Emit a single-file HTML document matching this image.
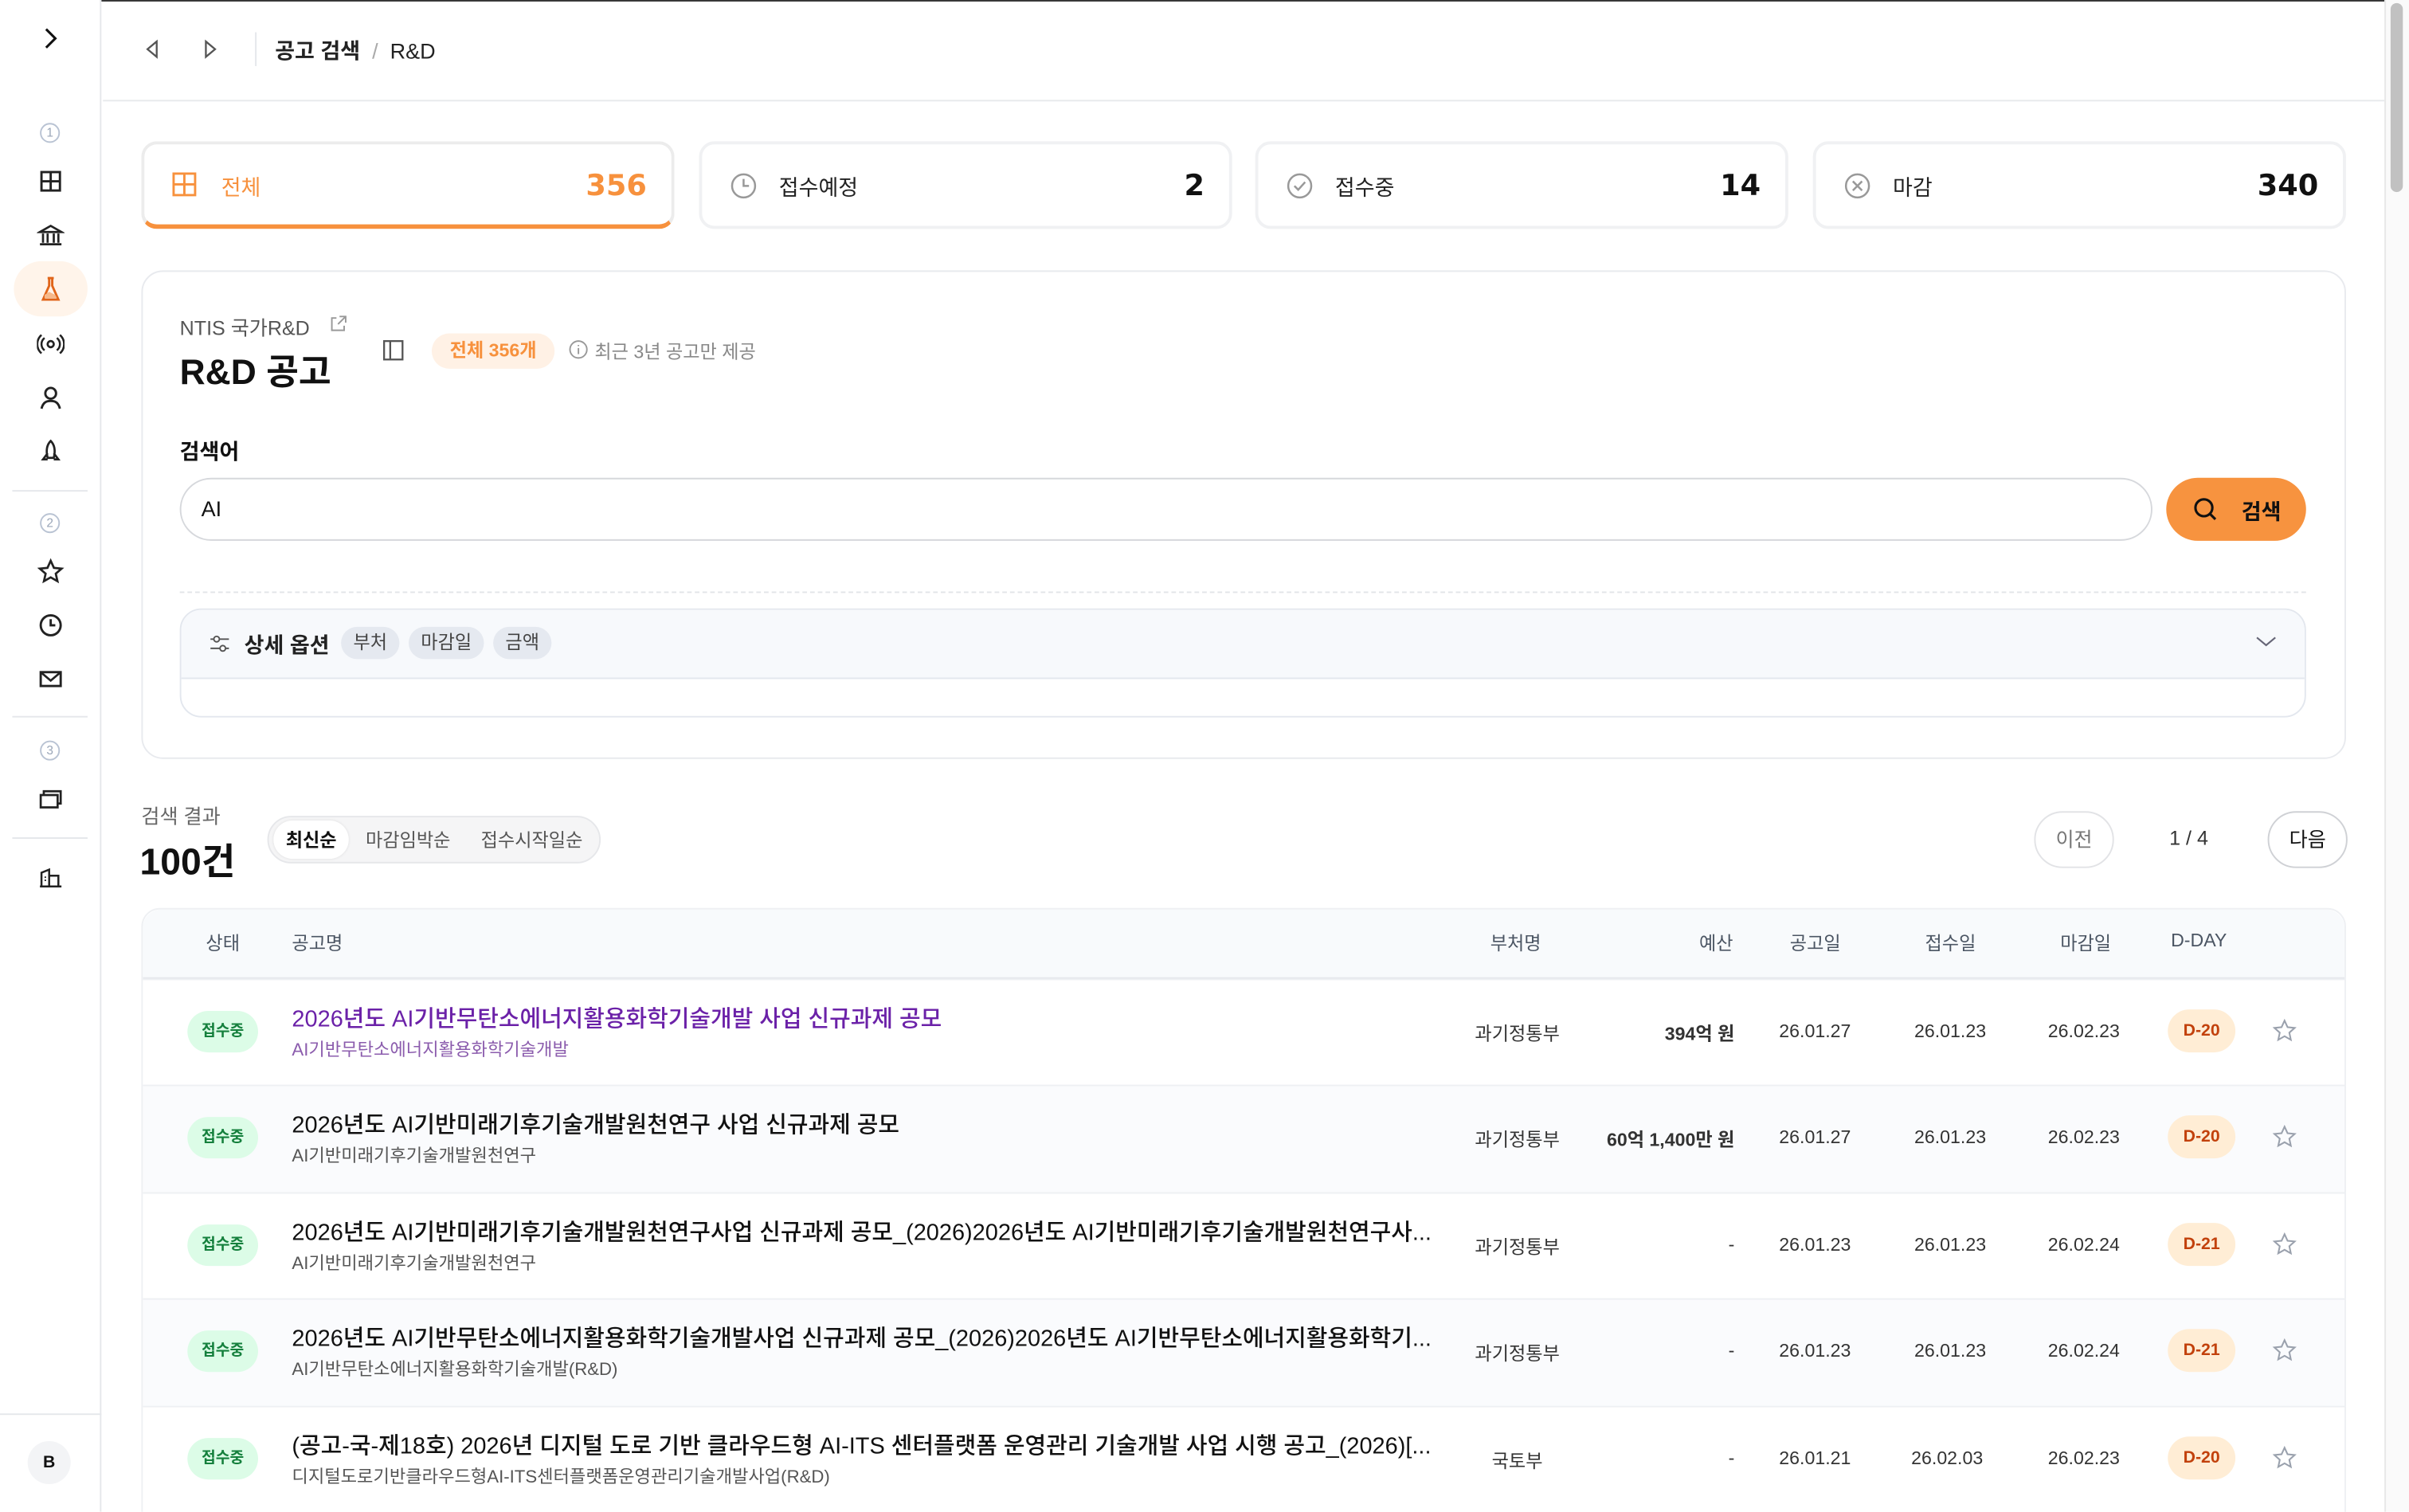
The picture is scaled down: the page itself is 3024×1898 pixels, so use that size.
<!DOCTYPE html>
<html><head><meta charset="utf-8">
<style>
*{box-sizing:border-box;margin:0;padding:0}
html,body{width:3024px;height:1898px;overflow:hidden;background:#fff}
#w{position:absolute;left:0;top:0;width:1568px;height:984px;overflow:hidden;transform:scale(1.928571);transform-origin:0 0;font-family:"Liberation Sans","Noto Sans CJK KR",sans-serif;color:#111;background:#fff}
.a{position:absolute}
.side{left:0;top:0;width:66px;height:984px;border-right:1px solid #e5e7eb;background:#fff}
.ic{position:absolute;left:24px;width:18px;height:18px}
.sep{position:absolute;left:8px;width:49px;height:1px;background:#e5e7eb}
.num{position:absolute;left:26px;width:13px;height:13px;border:1px solid #b9c3d3;border-radius:50%;font-size:8px;color:#9aa6b8;text-align:center;line-height:11px}
.card{position:absolute;top:92px;height:57px;width:347px;border:2px solid #f0f1f3;border-radius:10px;background:#fff}
.card .l{position:absolute;left:50px;top:18px;font-size:14px;color:#222}
.card .n{position:absolute;right:16px;top:16px;font-size:19px;font-weight:bold;font-family:"DejaVu Sans",sans-serif;color:#111}
.card svg{position:absolute;left:18px;top:18px}
.th{position:absolute;top:605px;font-size:12px;color:#4b5563}
.row{position:absolute;left:93px;width:1433px;height:70px;border-top:1px solid #eef0f3}
.bd{position:absolute;left:29px;top:20px;width:46px;height:27px;border-radius:14px;background:#dcfce7;color:#15803d;font-size:10px;font-weight:bold;text-align:center;line-height:27px}
.t{position:absolute;left:97px;top:14px;font-size:15px;color:#111;white-space:nowrap;font-weight:500}
.s{position:absolute;left:97px;top:37px;font-size:11.5px;color:#555;white-space:nowrap}
.c{position:absolute;top:26px;font-size:12px;color:#333;white-space:nowrap}
.dd{position:absolute;left:1318px;top:19px;width:44px;height:28px;border-radius:14px;background:#ffedd5;color:#c2410c;font-size:11px;font-weight:bold;text-align:center;line-height:28px}
.st{position:absolute;left:1386px;top:25px}
</style></head><body><div id="w">
<div class="a" style="left:0;top:0;width:1568px;height:1px;background:#333"></div>
<div class="a side">
 <svg class="ic" style="top:16px" viewBox="0 0 18 18"><path d="M6 3l6 6-6 6" fill="none" stroke="#111" stroke-width="1.6"/></svg>
 <div class="num" style="top:80px">1</div>
 <svg class="ic" style="top:109px" viewBox="0 0 18 18"><rect x="3" y="3" width="12" height="12" fill="none" stroke="#222" stroke-width="1.5"/><path d="M9 3v12M3 9h12" stroke="#222" stroke-width="1.5"/></svg>
 <svg class="ic" style="top:144px" viewBox="0 0 18 18"><path d="M2 7l7-4 7 4zM4 8v6M7 8v6M11 8v6M14 8v6M2 15h14" fill="none" stroke="#222" stroke-width="1.4"/></svg>
 <div class="a" style="left:9px;top:170px;width:48px;height:36px;border-radius:18px;background:#fff4ea"></div>
 <svg class="ic" style="top:179px" viewBox="0 0 18 18"><path d="M7 2h4M8 2v5l-4 9h10l-4-9V2" fill="none" stroke="#e0651a" stroke-width="1.5"/><path d="M5 13l3-2 4 2 1 2H5z" fill="#f7b98a"/></svg>
 <svg class="ic" style="top:215px" viewBox="0 0 18 18"><circle cx="9" cy="9" r="2" fill="none" stroke="#222" stroke-width="1.4"/><path d="M5 5a5 5 0 000 8M13 5a5 5 0 010 8M3 3a8 8 0 000 12M15 3a8 8 0 010 12" fill="none" stroke="#222" stroke-width="1.3"/></svg>
 <svg class="ic" style="top:250px" viewBox="0 0 18 18"><circle cx="9" cy="6" r="3.5" fill="none" stroke="#222" stroke-width="1.5"/><path d="M3 16c1-4 3-5 6-5s5 1 6 5" fill="none" stroke="#222" stroke-width="1.5"/></svg>
 <svg class="ic" style="top:285px" viewBox="0 0 18 18"><path d="M9 2c3 3 3 7 2 11H7C6 9 6 5 9 2zM7 10l-3 4h3M11 10l3 4h-3" fill="none" stroke="#222" stroke-width="1.4"/></svg>
 <div class="sep" style="top:319px"></div>
 <div class="num" style="top:334px">2</div>
 <svg class="ic" style="top:363px" viewBox="0 0 18 18"><path d="M9 2l2.1 4.6 5 .5-3.8 3.3 1.1 4.9L9 12.8l-4.4 2.5 1.1-4.9L1.9 7.1l5-.5z" fill="none" stroke="#222" stroke-width="1.4"/></svg>
 <svg class="ic" style="top:398px" viewBox="0 0 18 18"><circle cx="9" cy="9" r="6.5" fill="none" stroke="#222" stroke-width="1.5"/><path d="M9 5v4h3" fill="none" stroke="#222" stroke-width="1.5"/></svg>
 <svg class="ic" style="top:433px" viewBox="0 0 18 18"><rect x="2.5" y="4.5" width="13" height="9" fill="none" stroke="#222" stroke-width="1.5"/><path d="M2.5 4.5L9 10l6.5-5.5" fill="none" stroke="#222" stroke-width="1.4"/></svg>
 <div class="sep" style="top:466px"></div>
 <div class="num" style="top:482px">3</div>
 <svg class="ic" style="top:511px" viewBox="0 0 18 18"><path d="M2.5 6.5h11v8h-11zM4.5 6.5V4h11v8h-2" fill="none" stroke="#222" stroke-width="1.4"/></svg>
 <div class="sep" style="top:545px"></div>
 <svg class="ic" style="top:562px" viewBox="0 0 18 18"><path d="M2 15h14M3 15V6l5-2v11M8 8h6v7" fill="none" stroke="#222" stroke-width="1.3"/><path d="M5 9h1M5 11h1" stroke="#222"/></svg>
 <div class="a" style="left:0;top:920px;width:66px;height:1px;background:#e5e7eb"></div>
 <div class="a" style="left:18px;top:938px;width:28px;height:28px;border-radius:14px;background:#f3f4f6;font-size:11px;font-weight:bold;text-align:center;line-height:28px">B</div>
</div>
<div class="a" style="left:67px;top:65px;width:1485px;height:1px;background:#e8e9ec"></div>
<svg class="a" style="left:93px;top:25px" width="12" height="14" viewBox="0 0 12 14"><path d="M9 2L3 7l6 5z" fill="none" stroke="#555" stroke-width="1.2"/></svg>
<svg class="a" style="left:131px;top:25px" width="12" height="14" viewBox="0 0 12 14"><path d="M3 2l6 5-6 5z" fill="none" stroke="#555" stroke-width="1.2"/></svg>
<div class="a" style="left:166px;top:21px;width:1px;height:22px;background:#e5e7eb"></div>
<div class="a" style="left:179px;top:23px;font-size:14px;color:#222"><b style="font-weight:600">공고 검색</b> <span style="color:#aaa">&nbsp;/&nbsp;</span> R&amp;D</div>
<div class="a" style="left:1552px;top:0;width:16px;height:984px;background:#fafafa;border-left:1px solid #e8e8e8"></div>
<div class="a" style="left:1556px;top:2px;width:8px;height:123px;border-radius:4px;background:#c1c1c1"></div>
<div class="card" style="left:92px;border-color:#ececec;border-bottom:3px solid #f7913d">
 <svg width="16" height="16" viewBox="0 0 16 16"><rect x="1" y="1" width="14" height="14" fill="none" stroke="#f7913d" stroke-width="1.5"/><path d="M8 1v14M1 8h14" stroke="#f7913d" stroke-width="1.5"/></svg>
 <div class="l" style="color:#f7913d">전체</div><div class="n" style="color:#f7913d">356</div></div>
<div class="card" style="left:455px"><svg width="18" height="18" viewBox="0 0 18 18"><circle cx="9" cy="9" r="7.5" fill="none" stroke="#999" stroke-width="1.3"/><path d="M9 4.5V9h3.5" fill="none" stroke="#999" stroke-width="1.3"/></svg><div class="l">접수예정</div><div class="n">2</div></div>
<div class="card" style="left:817px"><svg width="18" height="18" viewBox="0 0 18 18"><circle cx="9" cy="9" r="7.5" fill="none" stroke="#999" stroke-width="1.3"/><path d="M5.5 9l2.5 2.5 4.5-5" fill="none" stroke="#999" stroke-width="1.3"/></svg><div class="l">접수중</div><div class="n">14</div></div>
<div class="card" style="left:1180px"><svg width="18" height="18" viewBox="0 0 18 18"><circle cx="9" cy="9" r="7.5" fill="none" stroke="#999" stroke-width="1.3"/><path d="M6 6l6 6M12 6l-6 6" stroke="#999" stroke-width="1.3"/></svg><div class="l">마감</div><div class="n">340</div></div>
<div class="a" style="left:92px;top:176px;width:1435px;height:318px;border:1.5px solid #e8eaee;border-radius:14px"></div>
<div class="a" style="left:117px;top:203px;font-size:13px;color:#555">NTIS 국가R&amp;D</div>
<svg class="a" style="left:214px;top:205px" width="12" height="12" viewBox="0 0 12 12"><path d="M5 2H2v8h8V7M7 1h4v4M11 1L6 6" fill="none" stroke="#999" stroke-width="1"/></svg>
<div class="a" style="left:117px;top:223px;font-size:23px;font-weight:bold;color:#111">R&amp;D 공고</div>
<svg class="a" style="left:249px;top:221px" width="14" height="14" viewBox="0 0 14 14"><rect x="1" y="1" width="12" height="12" fill="none" stroke="#555" stroke-width="1.2"/><path d="M5 1v12" stroke="#555" stroke-width="1.2"/></svg>
<div class="a" style="left:281px;top:217px;width:80px;height:23px;border-radius:12px;background:#fff1e5;color:#f7913d;font-size:12px;font-weight:bold;text-align:center;line-height:23px">전체 356개</div>
<svg class="a" style="left:370px;top:221px" width="13" height="13" viewBox="0 0 13 13"><circle cx="6.5" cy="6.5" r="5.5" fill="none" stroke="#999"/><path d="M6.5 5.5v4M6.5 3.5v.8" stroke="#999"/></svg>
<div class="a" style="left:387px;top:220px;font-size:12px;color:#888">최근 3년 공고만 제공</div>
<div class="a" style="left:117px;top:284px;font-size:14px;font-weight:600">검색어</div>
<div class="a" style="left:117px;top:311px;width:1284px;height:41px;border:1.5px solid #d6d8dc;border-radius:21px"></div>
<div class="a" style="left:131px;top:323px;font-size:14px">AI</div>
<div class="a" style="left:1410px;top:311px;width:91px;height:41px;border-radius:21px;background:#f7933f"></div>
<svg class="a" style="left:1427px;top:323px" width="17" height="17" viewBox="0 0 17 17"><circle cx="7.5" cy="7.5" r="5.5" fill="none" stroke="#111" stroke-width="1.6"/><path d="M11.5 11.5l3.5 3.5" stroke="#111" stroke-width="1.6"/></svg>
<div class="a" style="left:1459px;top:323px;font-size:14px;font-weight:600">검색</div>
<div class="a" style="left:117px;top:385px;width:1384px;border-top:1px dashed #e2e4e8"></div>
<div class="a" style="left:117px;top:396px;width:1384px;height:71px;border:1px solid #e3e7ee;border-radius:14px;overflow:hidden"><div style="height:45px;background:#f7f9fc;border-bottom:1px solid #e3e7ee"></div></div>
<svg class="a" style="left:136px;top:412px" width="14" height="14" viewBox="0 0 14 14"><path d="M1 4h12M1 10h12" stroke="#555"/><circle cx="5" cy="4" r="1.8" fill="#fff" stroke="#555"/><circle cx="9" cy="10" r="1.8" fill="#fff" stroke="#555"/></svg>
<div class="a" style="left:159px;top:410px;font-size:14px;font-weight:600;color:#222">상세 옵션</div>
<div class="a" style="left:222px;top:408px;width:38px;height:21px;border-radius:11px;background:#e5e9f0;font-size:12px;color:#444;text-align:center;line-height:21px">부처</div>
<div class="a" style="left:266px;top:408px;width:49px;height:21px;border-radius:11px;background:#e5e9f0;font-size:12px;color:#444;text-align:center;line-height:21px">마감일</div>
<div class="a" style="left:321px;top:408px;width:38px;height:21px;border-radius:11px;background:#e5e9f0;font-size:12px;color:#444;text-align:center;line-height:21px">금액</div>
<svg class="a" style="left:1468px;top:413px" width="14" height="10" viewBox="0 0 14 10"><path d="M1 2l6 5 6-5" fill="none" stroke="#667" stroke-width="1.1"/></svg>
<div class="a" style="left:92px;top:521px;font-size:13px;color:#666">검색 결과</div>
<div class="a" style="left:91px;top:541px;font-size:24px;font-weight:bold">100건</div>
<div class="a" style="left:174px;top:531px;width:217px;height:31px;border:1px solid #e6e7ea;border-radius:16px;background:#f5f5f6"></div>
<div class="a" style="left:178px;top:534px;width:49px;height:25px;border-radius:13px;background:#fff;box-shadow:0 0 2px rgba(0,0,0,.1)"></div>
<div class="a" style="left:186px;top:538px;font-size:12px;font-weight:600">최신순</div>
<div class="a" style="left:238px;top:538px;font-size:12px;color:#555">마감임박순</div>
<div class="a" style="left:313px;top:538px;font-size:12px;color:#555">접수시작일순</div>
<div class="a" style="left:1324px;top:528px;width:52px;height:37px;border:1px solid #e2e3e6;border-radius:19px;font-size:13px;color:#777;text-align:center;line-height:35px">이전</div>
<div class="a" style="left:1412px;top:538px;font-size:13px;color:#333">1 / 4</div>
<div class="a" style="left:1476px;top:528px;width:52px;height:37px;border:1px solid #cfd1d5;border-radius:19px;font-size:13px;color:#111;text-align:center;line-height:35px">다음</div>
<div class="a" style="left:92px;top:591px;width:1435px;height:400px;border:1px solid #eef0f3;border-radius:12px 12px 0 0;background:#fff"></div>
<div class="a" style="left:93px;top:592px;width:1433px;height:45px;background:#f8fafc;border-radius:12px 12px 0 0;border-bottom:1.5px solid #e6e8ec"></div>
<div class="th" style="left:134px">상태</div>
<div class="th" style="left:190px">공고명</div>
<div class="th" style="left:970px">부처명</div>
<div class="th" style="left:1106px">예산</div>
<div class="th" style="left:1165px">공고일</div>
<div class="th" style="left:1253px">접수일</div>
<div class="th" style="left:1341px">마감일</div>
<div class="th" style="left:1413px">D-DAY</div>

<div class="row" style="top:637px;background:#fff"><div class="bd">접수중</div><div class="t" style="color:#6b21a8">2026년도 AI기반무탄소에너지활용화학기술개발 사업 신규과제 공모</div><div class="s" style="color:#8b5cad">AI기반무탄소에너지활용화학기술개발</div><div class="c" style="left:867px">과기정통부</div><div class="c" style="right:397px;font-weight:600">394억 원</div><div class="c" style="left:1065px">26.01.27</div><div class="c" style="left:1153px">26.01.23</div><div class="c" style="left:1240px">26.02.23</div><div class="dd">D-20</div><svg class="st" width="16" height="16" viewBox="0 0 18 18"><path d="M9 1.5l2.2 4.8 5.2.5-3.9 3.5 1.1 5.2L9 12.9l-4.6 2.6 1.1-5.2L1.6 6.8l5.2-.5z" fill="none" stroke="#9aa1ad" stroke-width="1.2"/></svg></div>
<div class="row" style="top:706px;background:#fafbfd"><div class="bd">접수중</div><div class="t">2026년도 AI기반미래기후기술개발원천연구 사업 신규과제 공모</div><div class="s">AI기반미래기후기술개발원천연구</div><div class="c" style="left:867px">과기정통부</div><div class="c" style="right:397px;font-weight:600">60억 1,400만 원</div><div class="c" style="left:1065px">26.01.27</div><div class="c" style="left:1153px">26.01.23</div><div class="c" style="left:1240px">26.02.23</div><div class="dd">D-20</div><svg class="st" width="16" height="16" viewBox="0 0 18 18"><path d="M9 1.5l2.2 4.8 5.2.5-3.9 3.5 1.1 5.2L9 12.9l-4.6 2.6 1.1-5.2L1.6 6.8l5.2-.5z" fill="none" stroke="#9aa1ad" stroke-width="1.2"/></svg></div>
<div class="row" style="top:776px;background:#fff"><div class="bd">접수중</div><div class="t">2026년도 AI기반미래기후기술개발원천연구사업 신규과제 공모_(2026)2026년도 AI기반미래기후기술개발원천연구사...</div><div class="s">AI기반미래기후기술개발원천연구</div><div class="c" style="left:867px">과기정통부</div><div class="c" style="right:397px">-</div><div class="c" style="left:1065px">26.01.23</div><div class="c" style="left:1153px">26.01.23</div><div class="c" style="left:1240px">26.02.24</div><div class="dd">D-21</div><svg class="st" width="16" height="16" viewBox="0 0 18 18"><path d="M9 1.5l2.2 4.8 5.2.5-3.9 3.5 1.1 5.2L9 12.9l-4.6 2.6 1.1-5.2L1.6 6.8l5.2-.5z" fill="none" stroke="#9aa1ad" stroke-width="1.2"/></svg></div>
<div class="row" style="top:845px;background:#fafbfd"><div class="bd">접수중</div><div class="t">2026년도 AI기반무탄소에너지활용화학기술개발사업 신규과제 공모_(2026)2026년도 AI기반무탄소에너지활용화학기...</div><div class="s">AI기반무탄소에너지활용화학기술개발(R&amp;D)</div><div class="c" style="left:867px">과기정통부</div><div class="c" style="right:397px">-</div><div class="c" style="left:1065px">26.01.23</div><div class="c" style="left:1153px">26.01.23</div><div class="c" style="left:1240px">26.02.24</div><div class="dd">D-21</div><svg class="st" width="16" height="16" viewBox="0 0 18 18"><path d="M9 1.5l2.2 4.8 5.2.5-3.9 3.5 1.1 5.2L9 12.9l-4.6 2.6 1.1-5.2L1.6 6.8l5.2-.5z" fill="none" stroke="#9aa1ad" stroke-width="1.2"/></svg></div>
<div class="row" style="top:915px;background:#fff"><div class="bd">접수중</div><div class="t">(공고-국-제18호) 2026년 디지털 도로 기반 클라우드형 AI-ITS 센터플랫폼 운영관리 기술개발 사업 시행 공고_(2026)[...</div><div class="s">디지털도로기반클라우드형AI-ITS센터플랫폼운영관리기술개발사업(R&amp;D)</div><div class="c" style="left:878px">국토부</div><div class="c" style="right:397px">-</div><div class="c" style="left:1065px">26.01.21</div><div class="c" style="left:1151px">26.02.03</div><div class="c" style="left:1240px">26.02.23</div><div class="dd">D-20</div><svg class="st" width="16" height="16" viewBox="0 0 18 18"><path d="M9 1.5l2.2 4.8 5.2.5-3.9 3.5 1.1 5.2L9 12.9l-4.6 2.6 1.1-5.2L1.6 6.8l5.2-.5z" fill="none" stroke="#9aa1ad" stroke-width="1.2"/></svg></div>
</div></body></html>
